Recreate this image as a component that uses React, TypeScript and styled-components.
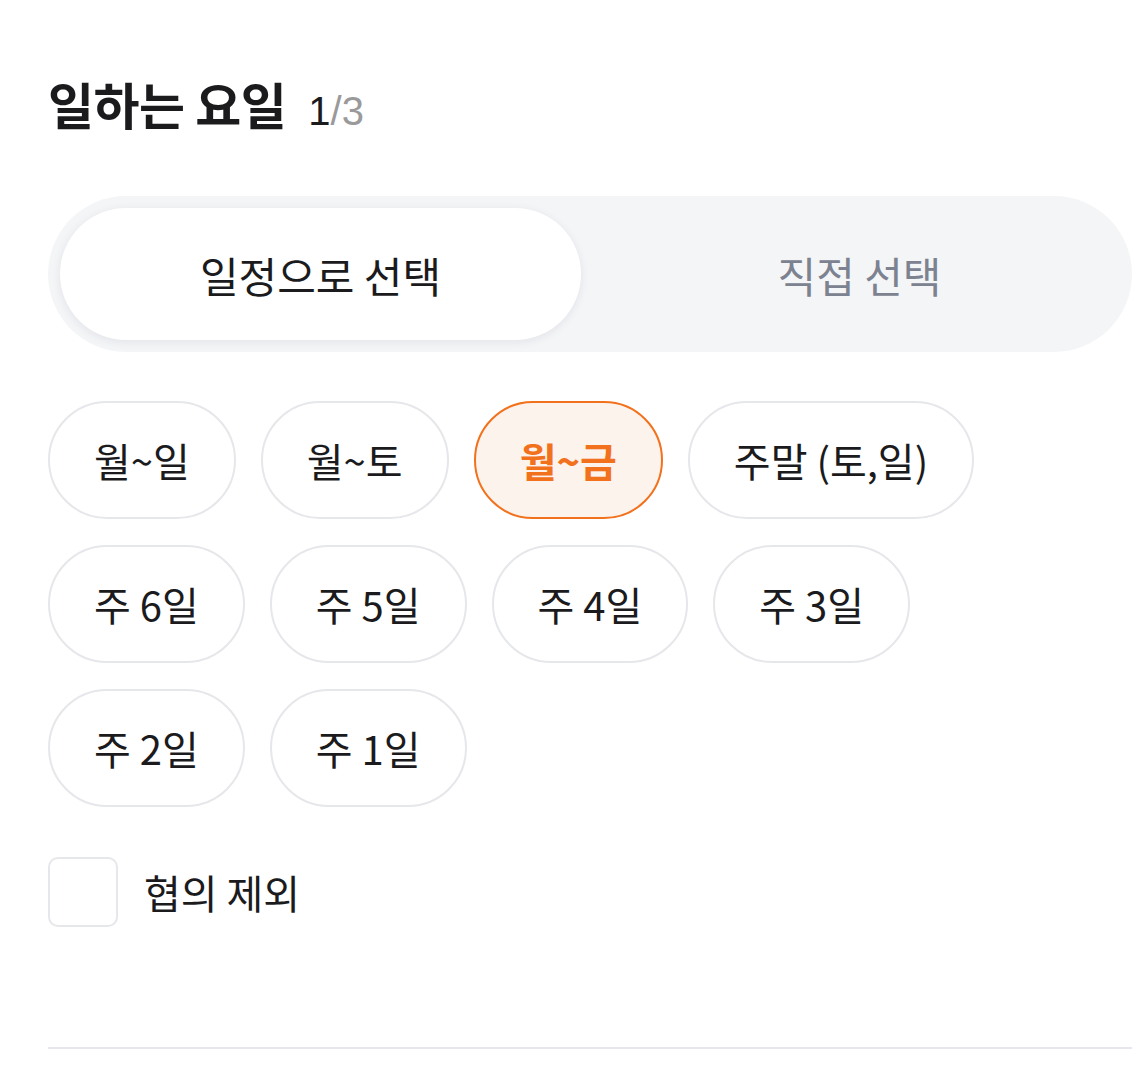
import React, { useState } from 'react';
import styled, { createGlobalStyle } from 'styled-components';

const palette = {
  text: '#1b1b1d',
  muted: '#7c8290',
  faint: '#9a9a9a',
  line: '#e6e7ea',
  track: '#f4f5f7',
  accent: '#f2711c',
  accentBg: '#fcf3ec',
};

const GlobalStyle = createGlobalStyle`
  html, body {
    margin: 0;
    padding: 0;
    background: #ffffff;
  }
  body {
    font-family: "Noto Sans CJK KR", "Noto Sans", sans-serif;
    color: ${palette.text};
  }
`;

const presets = ['월~일', '월~토', '월~금', '주말 (토,일)'];
const counts = ['주 6일', '주 5일', '주 4일', '주 3일', '주 2일', '주 1일'];

export default function App() {
  const [mode, setMode] = useState<'schedule' | 'manual'>('schedule');
  const [picked, setPicked] = useState('월~금');
  const [excluded, setExcluded] = useState(false);

  return (
    <>
      <GlobalStyle />
      <Root>
        <Header>
          <Title>일하는 요일</Title>
          <Step>
            1<StepTotal>/3</StepTotal>
          </Step>
        </Header>

        <Segment>
          <SegmentButton active={mode === 'schedule'} onClick={() => setMode('schedule')}>
            일정으로 선택
          </SegmentButton>
          <SegmentButton active={mode === 'manual'} onClick={() => setMode('manual')}>
            직접 선택
          </SegmentButton>
        </Segment>

        <ChipArea>
          <ChipRow>
            {presets.map((p) => (
              <Chip key={p} active={picked === p} onClick={() => setPicked(p)}>
                {p}
              </Chip>
            ))}
          </ChipRow>
          <ChipRow>
            {counts.slice(0, 4).map((p) => (
              <Chip key={p} active={picked === p} onClick={() => setPicked(p)}>
                {p}
              </Chip>
            ))}
          </ChipRow>
          <ChipRow>
            {counts.slice(4).map((p) => (
              <Chip key={p} active={picked === p} onClick={() => setPicked(p)}>
                {p}
              </Chip>
            ))}
          </ChipRow>
        </ChipArea>

        <CheckRow onClick={() => setExcluded(!excluded)}>
          <CheckBox checked={excluded} />
          <CheckLabel>협의 제외</CheckLabel>
        </CheckRow>

        <Divider />
      </Root>
    </>
  );
}

const Root = styled.div`
  width: 1084px;
  padding: 70px 0 0 48px;
  display: flex;
  flex-direction: column;
`;

const Header = styled.div`
  display: flex;
  align-items: baseline;
  gap: 22px;
  height: 66px;
`;

const Title = styled.h1`
  margin: 0;
  font-size: 50px;
  font-weight: 700;
  letter-spacing: -0.5px;
  line-height: 66px;
`;

const Step = styled.span`
  font-family: "Liberation Sans", "Noto Sans", sans-serif;
  font-size: 40px;
  color: ${palette.text};
`;

const StepTotal = styled.span`
  color: ${palette.faint};
`;

const Segment = styled.div`
  margin-top: 60px;
  height: 156px;
  box-sizing: border-box;
  padding: 12px;
  border-radius: 78px;
  background: ${palette.track};
  display: grid;
  grid-template-columns: 1fr 1fr;
  gap: 18px;
`;

const SegmentButton = styled.button<{ active: boolean }>`
  border: none;
  border-radius: 66px;
  font-family: inherit;
  font-size: 42px;
  font-weight: 400;
  cursor: pointer;
  background: ${(p) => (p.active ? '#ffffff' : 'transparent')};
  color: ${(p) => (p.active ? palette.text : palette.muted)};
  box-shadow: ${(p) => (p.active ? '0 2px 10px rgba(20, 30, 50, 0.08)' : 'none')};
`;

const ChipArea = styled.div`
  margin-top: 49px;
  display: flex;
  flex-direction: column;
  gap: 26px;
`;

const ChipRow = styled.div`
  display: flex;
  gap: 25px;
`;

const Chip = styled.button<{ active: boolean }>`
  height: 118px;
  box-sizing: border-box;
  padding: 0 44px;
  border-radius: 59px;
  border: 2px solid ${(p) => (p.active ? palette.accent : palette.line)};
  background: ${(p) => (p.active ? palette.accentBg : '#ffffff')};
  color: ${(p) => (p.active ? palette.accent : palette.text)};
  font-family: "Noto Sans CJK KR", "Noto Sans", sans-serif;
  font-size: 40px;
  font-weight: ${(p) => (p.active ? 700 : 400)};
  white-space: nowrap;
  cursor: pointer;
`;

const CheckRow = styled.label`
  margin-top: 50px;
  display: flex;
  align-items: center;
  gap: 26px;
  cursor: pointer;
`;

const CheckBox = styled.span<{ checked: boolean }>`
  width: 70px;
  height: 70px;
  box-sizing: border-box;
  border-radius: 10px;
  border: 2px solid ${(p) => (p.checked ? palette.accent : palette.line)};
  background: ${(p) => (p.checked ? palette.accent : '#ffffff')};
`;

const CheckLabel = styled.span`
  font-size: 40px;
  color: ${palette.text};
`;

const Divider = styled.hr`
  margin: 120px 0 0;
  border: none;
  height: 2px;
  background: ${palette.line};
`;
